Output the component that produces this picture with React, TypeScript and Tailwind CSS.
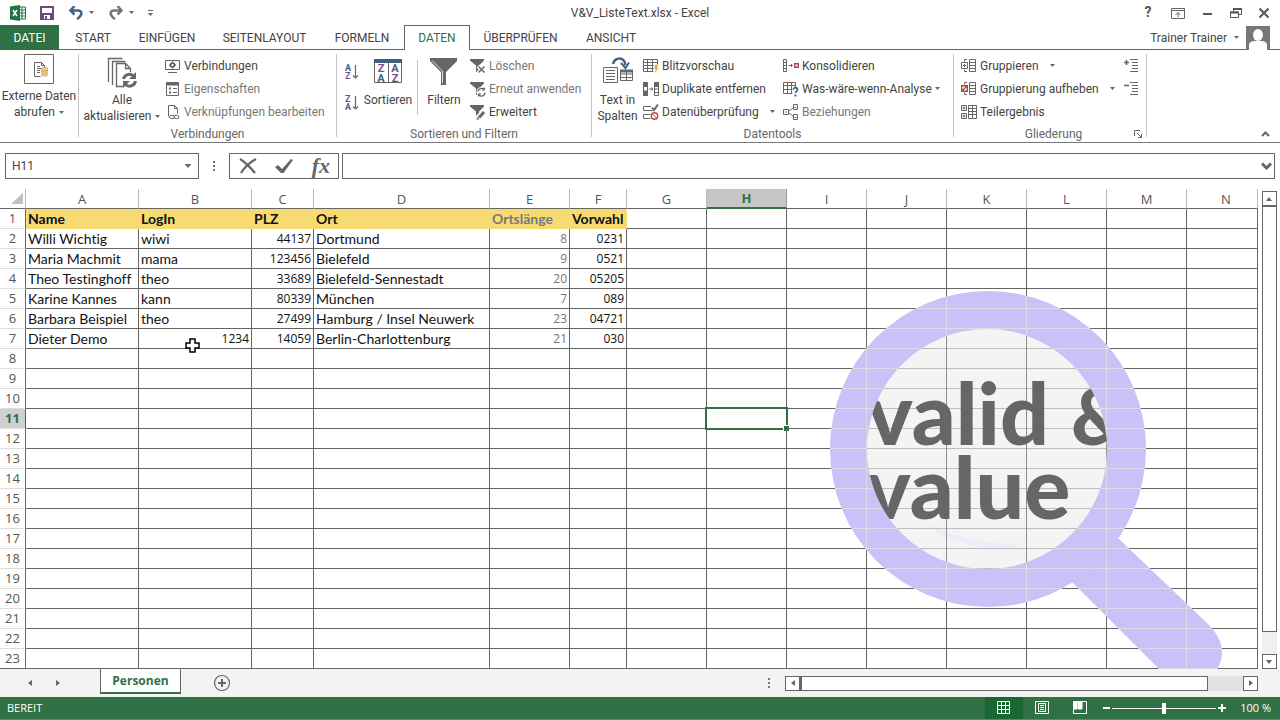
import { useState } from 'react';
import type { ReactNode } from 'react';
import { clsx } from 'clsx';

const Caret = ({ className }: { className?: string }) => (
  <svg viewBox="0 0 5 3" className={clsx('h-[3px] w-[5px] shrink-0 fill-[#666]', className)}>
    <path d="M0 0h5L2.5 3z" />
  </svg>
);

const Icon = ({ children, className = 'size-4' }: { children: ReactNode; className?: string }) => {
  const [w, h] = className === 'size-4' ? [16, 16] : [30, 30];
  return (
    <svg viewBox={`0 0 ${w} ${h}`} fill="none" stroke="#666" className={clsx('shrink-0 overflow-visible', className)}>
      {children}
    </svg>
  );
};

/* ---------- small ribbon icons ---------- */

const ConnectionsIcon = () => (
  <Icon>
    <path d="M.5 2.5h14v9H.5zM3 14.5h9" />
    <circle cx="7.5" cy="7" r="2" stroke="#555" strokeWidth="1.6" />
    <path d="M7.5 3.5v1.5M7.5 9v1.500M4 7h1.500M9.500 7H11" stroke="#555" />
  </Icon>
);

const PropertiesIcon = () => (
  <Icon>
    <path d="M1.500 1.500h12v13h-12z" />
    <path d="M1 3h13" strokeWidth="3" />
    <path d="M4 7.500h2M4 11.500h2" strokeWidth="2" />
    <path d="M8 7.500h4M8 11.500h4" />
  </Icon>
);

const EditLinksIcon = () => (
  <Icon>
    <path d="M3.500 12.500v-11h6l3 3v5M9.500 1.500v3h3" />
    <ellipse cx="7" cy="13" rx="2.500" ry="1.700" />
    <ellipse cx="11.500" cy="13" rx="2.500" ry="1.700" />
  </Icon>
);

const Funnel = () => <path d="M0 1h14v1.500L9 7.500V14H6V7.500L0 2.500z" fill="#666" stroke="none" />;

const ClearIcon = () => (
  <Icon>
    <Funnel />
    <path d="M8 8l7 7M15 8l-7 7" stroke="#fff" strokeWidth="4" />
    <path d="M8.500 8.500l6 6M14.500 8.500l-6 6" strokeWidth="1.500" />
  </Icon>
);

const ReapplyIcon = () => (
  <Icon>
    <Funnel />
    <circle cx="11.500" cy="11" r="5" fill="#fff" stroke="none" />
    <path d="M8 10.500a3.500 3.500 0 0 1 6-2M15 11.500a3.500 3.500 0 0 1-6 2.500" strokeWidth="1.400" />
    <path d="M15 6v3.500h-3.500zM8 16v-3.500h3.500z" fill="#666" stroke="none" />
  </Icon>
);

const AdvancedIcon = () => (
  <Icon>
    <Funnel />
    <path d="M7.500 14.500l7-7" stroke="#fff" strokeWidth="6" />
    <path d="M9 13.500l5-5.500" strokeWidth="3" />
    <path d="M6.500 16l1-3 2 2z" fill="#666" stroke="none" />
  </Icon>
);

const FlashFillIcon = () => (
  <Icon>
    <path d="M.5 1.500h14v12H.5zM.5 4.500h14M.5 7.500h14M.5 10.500h14M4.500 1.500v12M9.500 1.500v12" />
    <path d="M11 6h5v10h-6z" fill="#fff" stroke="none" />
    <path d="M12.500 6.500h3l-1.500 3h2l-4.500 6 1.200-4.500H11z" fill="#e0b04c" stroke="none" />
  </Icon>
);

const DuplicatesIcon = () => (
  <Icon>
    <path d="M.5 1.500h4v13h-4zM11.500 1.500h4v13h-4z" />
    <path d="M.5 1.500h4v4h-4zM.5 10h4v4.500h-4zM11.500 1.500h4v4h-4z" fill="#666" />
    <path d="M11.500 8h4M11.500 11.500h4M6 8h4M8.500 6.500L10 8 8.500 9.500" />
  </Icon>
);

const ValidationIcon = () => (
  <Icon>
    <path d="M8 2.500H.5v4h9M7.500 10.500h-7v4h7" />
    <path d="M9 3.500l2 2.500 4-5.500" strokeWidth="2" />
    <circle cx="11.500" cy="12" r="3.200" stroke="#b9504c" strokeWidth="1.400" />
    <path d="M9.300 9.800l4.400 4.400" stroke="#b9504c" />
  </Icon>
);

const ConsolidateIcon = () => (
  <Icon>
    <path d="M.5 1.500h3v12h-3zM.5 4.500h3M.5 7.500h3M.5 10.500h3M5.500 7.500h4M8 6l1.500 1.500L8 9" />
    <path d="M11.700 5.700h3.600v3.600h-3.600z" stroke="#a8474f" strokeWidth="1.400" />
  </Icon>
);

const WhatIfIcon = () => (
  <Icon>
    <path d="M.5 1.500h12v11H.5zM.5 4.500h12M.5 8.500h12M4.500 1.500v11M8.500 1.500v11" stroke="#8a5a50" />
    <path d="M9.500 6h6.500v10H9.500z" fill="#fff" stroke="none" />
    <path d="M10.500 8.500a2 2 0 1 1 3 1.800c-.8.400-1 .7-1 1.700" stroke="#3f6389" strokeWidth="1.800" />
    <path d="M11.500 13.500h2v2h-2z" fill="#3f6389" stroke="none" />
  </Icon>
);

const RelationsIcon = () => (
  <Icon>
    <path d="M.5 5.500h5v5h-5zM10.500.5h4v5h-4zM10.500 10.500h4v5h-4zM6 7l4-3M6 9l4 3M2 8h2M11.500 3.500h2M11.500 13.500h2" />
  </Icon>
);

const outlineLines = 'M8.500 1.500h6v12h-6zM9 4.500h5M9 7.500h5M9 10.500h5';

const GroupIcon = () => (
  <Icon>
    <path d={`${outlineLines}M6 1.500H3.500v2M3.500 11.500v2H6`} />
    <path d="M.5 4.500h6v6h-6zM2 7.500h3M3.500 6v3" />
  </Icon>
);

const UngroupIcon = () => (
  <Icon>
    <path d={`${outlineLines}M6 1.500H3.500v2M3.500 11.500v2H6`} />
    <path d="M.7 4.700h5.600v5.600H.7zM1.500 9.500l4-4" stroke="#b0483c" strokeWidth="1.400" />
  </Icon>
);

const SubtotalIcon = () => (
  <Icon>
    <path d="M.5 1.500h5v5h-5zM.5 9.500h5v5h-5zM1.500 4h3M3 2.500v3M1.500 12h3M3 10.500v3M7.500 1.500h8v13h-8zM11.500 1.500v13M7.500 4.500h8M7.500 7.500h8M7.500 10.500h8" />
  </Icon>
);

const DetailIcon = ({ plus }: { plus?: boolean }) => (
  <Icon>
    <path d={plus ? 'M1 4.500h5M3.500 2v5' : 'M1 4.500h5'} strokeWidth="1.600" />
    <path d="M7 1.500h8M9 4.500h6M9 7.500h6M9 10.500h6M7 13.500h8" />
  </Icon>
);

const SortIcon = ({ first, second }: { first: string; second: string }) => (
  <Icon>
    <g fontSize="9" fontWeight="700" stroke="none">
      <text x="0" y="7" fill="#3f6389">{first}</text>
      <text x="0" y="15" fill="#7c4f8c">{second}</text>
    </g>
    <path d="M10.500 1v13M8 11.500l2.500 2.500 2.500-2.500" strokeWidth="1.200" />
  </Icon>
);

/* ---------- big ribbon icons ---------- */

const ExternalDataIcon = () => (
  <Icon className="size-[30px]">
    <path d="M.5.5h29v29H.5z" />
    <path d="M10.500 22.500v-14h7l3 3v3M17.500 8.500v3h3M10.500 22.500h6M13 12.500h3M13 14.500h5M13 16.500h3M13 18.500h3" />
    <path d="M17 15v6c0 1 1.500 1.500 3.500 1.500S24 22 24 21v-6z" fill="#e0c27a" stroke="none" />
    <ellipse cx="20.500" cy="15" rx="3.500" ry="1.500" fill="#efdca8" stroke="#c9a95e" />
  </Icon>
);

const RefreshAllIcon = () => (
  <Icon className="size-[30px]">
    <path d="M1.500 24V.5h14M5.500 27V3.500h13M16.500 28.500h-7v-23h9l5 5v4M18.500 5.500v5h5" strokeWidth="1.300" />
    <circle cx="22.500" cy="22" r="8" fill="#fff" stroke="none" />
    <path d="M16.500 21a6 6 0 0 1 10-3M28.500 23a6 6 0 0 1-10 3.500" strokeWidth="3" />
    <path d="M29 14v7h-7zM16 30v-7h7z" fill="#666" stroke="none" />
  </Icon>
);

const SortIconBig = () => (
  <Icon className="size-[30px]">
    <path d="M1.500 3.500h27v21h-27zM15.500 3.500v21" />
    <path d="M1 3h28" stroke="#3f5f80" strokeWidth="4" />
    <g fontSize="11" fontWeight="700" stroke="none" textAnchor="middle">
      <text x="8" y="14" fill="#7c4f8c">Z</text>
      <text x="8" y="24" fill="#3f6389">A</text>
      <text x="22" y="14" fill="#3f6389">A</text>
      <text x="22" y="24" fill="#7c4f8c">Z</text>
    </g>
  </Icon>
);

const FilterIconBig = () => (
  <Icon className="size-[30px]">
    <path d="M1 0h27v3L17 14v13h-5V14L1 3z" fill="#666" stroke="none" />
    <path d="M3 2.500L13.500 13v12" stroke="#ddd" />
  </Icon>
);

const TextColumnsIcon = () => (
  <Icon className="size-[30px]">
    <path d="M.5 9.500h14v15H.5zM3 12.500h9M3 15.500h9M3 18.500h9M3 21.500h9" />
    <path d="M17.500 12.500h12v10h-12zM17.500 16h12M17.500 19.500h12M23.500 14v8" />
    <path d="M17 13h13" strokeWidth="3" />
    <path d="M10 6c2-7 11-8 12.500 1" stroke="#3f6389" strokeWidth="2.500" />
    <path d="M18 5l4.500 5L26 4.500" stroke="#3f6389" strokeWidth="2" />
  </Icon>
);

/* ---------- ribbon building blocks ---------- */

const BigButton = ({ icon, lines, caret, className }: { icon: ReactNode; lines: string[]; caret?: boolean; className?: string }) => (
  <button className={clsx('flex shrink-0 flex-col items-center', className)}>
    {icon}
    {lines.map((line, i) => (
      <span key={line} className={clsx('flex items-center gap-1 whitespace-nowrap leading-4', i === 0 && 'mt-1')}>
        {line}
        {caret && i === lines.length - 1 && <Caret />}
      </span>
    ))}
  </button>
);

type SmallItem = { icon: ReactNode; label: string; muted?: boolean; caret?: string };

const SmallButtons = ({ items, className }: { items: SmallItem[]; className?: string }) => (
  <div className={clsx('flex flex-col items-start', className)}>
    {items.map(({ icon, label, muted, caret }) => (
      <button key={label} className={clsx('flex h-[23px] items-center gap-[3px] whitespace-nowrap', muted && 'text-[#777]')}>
        {icon}
        {label}
        {caret && <Caret className={caret} />}
      </button>
    ))}
  </div>
);

const RibbonGroup = ({ title, className, launcher, children }: { title?: string; className: string; launcher?: boolean; children: ReactNode }) => (
  <>
    <section className={clsx('relative flex shrink-0 flex-col', className)}>
      <div className="flex h-[72px] items-start">{children}</div>
      <div className="h-4 text-center leading-4 text-[#666]">{title}</div>
      {launcher && (
        <button aria-label="Dialogfeld öffnen" className="absolute right-1 bottom-1">
          <svg viewBox="0 0 8 8" fill="none" stroke="#666" className="size-2">
            <path d="M.5 6V.5H6M3 3l4 4M7.500 4v3.500H4" />
          </svg>
        </button>
      )}
    </section>
    <div className="h-[83px] w-px shrink-0 bg-[#c6c6c6]" />
  </>
);

const TitleBar = () => (
  <header className="grid h-[25px] grid-cols-[1fr_auto_1fr] items-center">
    <div className="flex items-center pl-[10px]">
      <svg viewBox="0 0 16 16" className="size-4">
        <path d="M8 2h7.500v12H8z" fill="#fff" stroke="#217346" />
        <path d="M9 5h6M9 8h6M9 11h6M12 2v12" stroke="#217346" />
        <path d="M0 1.500L10 0v16L0 14.500z" fill="#217346" />
        <path d="M3 5l4 6M7 5l-4 6" stroke="#fff" strokeWidth="1.500" />
      </svg>
      <button aria-label="Speichern" className="ml-[14px]">
        <svg viewBox="0 0 14 14" className="size-[14px]">
          <path d="M1 1h12v12H1z" fill="#fff" stroke="#6b4a80" strokeWidth="2" />
          <path d="M1 7h12v6H1z" fill="#6b4a80" />
          <path d="M4 9h6v4H4z" fill="#fff" />
          <path d="M5 10h2v3H5z" fill="#6b4a80" />
        </svg>
      </button>
      <button aria-label="Rückgängig" className="ml-[15px] flex items-center gap-[6px]">
        <svg viewBox="0 0 14 14" fill="none" stroke="#3f6389" strokeWidth="2.500" className="size-[14px]">
          <path d="M5.500 0L1.500 4.500l4 4M2 4.500h6.500c5.500 0 5 5-.5 8.500" />
        </svg>
        <Caret />
      </button>
      <button aria-label="Wiederholen" className="ml-[15px] flex items-center gap-[6px]">
        <svg viewBox="0 0 14 14" fill="none" stroke="#777" strokeWidth="2.500" className="size-[14px]">
          <path d="M8.500 0l4 4.500-4 4M12 4.500H5.500c-5.500 0-5 5 .5 8.500" />
        </svg>
        <Caret />
      </button>
      <button aria-label="Symbolleiste anpassen" className="ml-[14px]">
        <svg viewBox="0 0 5 6" className="h-[6px] w-[5px] fill-[#666]">
          <path d="M0 0h5v1H0zM0 3h5L2.500 6z" />
        </svg>
      </button>
    </div>
    <h1>V&amp;V_ListeText.xlsx - Excel</h1>
    <div className="flex items-center justify-end gap-4 pr-[10px] text-[#555]">
      <button aria-label="Hilfe" className="w-[14px] text-[14px] font-bold">?</button>
      <button aria-label="Menüband-Anzeigeoptionen">
        <svg viewBox="0 0 14 12" fill="none" stroke="#666" className="h-3 w-[14px]">
          <path d="M.5 1.500h13v10H.5zM.5 3.500h13M7 10V5.500M4.500 8L7 5.500 9.500 8" />
        </svg>
      </button>
      <button aria-label="Minimieren">
        <svg viewBox="0 0 13 12" className="h-3 w-[13px]"><path d="M2 6h9v2H2z" fill="#555" /></svg>
      </button>
      <button aria-label="Wiederherstellen">
        <svg viewBox="0 0 12 12" fill="none" stroke="#555" className="size-3">
          <path d="M3.500 4V1.500h8v6H9M.5 5h8v5.500h-8z" />
          <path d="M3 2h9M.5 5.500h8" strokeWidth="2" />
        </svg>
      </button>
      <button aria-label="Schließen">
        <svg viewBox="0 0 12 12" stroke="#555" strokeWidth="2" className="size-3"><path d="M1.500 1.500l9 9M10.500 1.500l-9 9" /></svg>
      </button>
    </div>
  </header>
);

const TABS = [
  { label: 'START', width: 'w-[64px]' },
  { label: 'EINFÜGEN', width: 'w-[84px]' },
  { label: 'SEITENLAYOUT', width: 'w-[111px]' },
  { label: 'FORMELN', width: 'w-[84px]' },
  { label: 'DATEN', width: 'w-[66px]' },
  { label: 'ÜBERPRÜFEN', width: 'w-[101px]' },
  { label: 'ANSICHT', width: 'w-[80px]' },
];

const TabBar = () => {
  const [active, setActive] = useState('DATEN');
  return (
    <nav className="flex h-[25px] shadow-[inset_0_-1px_#666]">
      <button className="mr-[2px] w-[59px] bg-[#2f7145] text-white">DATEI</button>
      {TABS.map(({ label, width }) => (
        <button
          key={label}
          onClick={() => setActive(label)}
          className={clsx('shrink-0', width, active === label && 'border border-b-0 border-[#666] bg-white text-[#2f7145]')}
        >
          {label}
        </button>
      ))}
      <button className="ml-auto flex items-center gap-[7px] pr-[10px]">
        Trainer Trainer
        <Caret />
        <svg viewBox="0 0 24 24" className="size-6">
          <path d="M0 0h24v24H0z" fill="#777" />
          <ellipse cx="12" cy="9" rx="5" ry="6" fill="#fff" />
          <path d="M3 24v-5c0-3 3-4 6-4h6c3 0 6 1 6 4v5z" fill="#fff" />
        </svg>
      </button>
    </nav>
  );
};

const Ribbon = () => (
  <div className="relative flex h-[93px] items-start overflow-hidden border-b border-[#777] pt-1">
    <RibbonGroup className="w-[78px]">
      <BigButton className="w-full" icon={<ExternalDataIcon />} lines={['Externe Daten', 'abrufen']} caret />
    </RibbonGroup>
    <RibbonGroup title="Verbindungen" className="w-[257px]">
      <BigButton className="w-[86px] pt-1" icon={<RefreshAllIcon />} lines={['Alle', 'aktualisieren']} caret />
      <SmallButtons
        items={[
          { icon: <ConnectionsIcon />, label: 'Verbindungen' },
          { icon: <PropertiesIcon />, label: 'Eigenschaften', muted: true },
          { icon: <EditLinksIcon />, label: 'Verknüpfungen bearbeiten', muted: true },
        ]}
      />
    </RibbonGroup>
    <RibbonGroup title="Sortieren und Filtern" className="w-[254px]">
      <div className="flex w-[24px] flex-col items-end gap-[15px] pt-[10px]">
        <button aria-label="Von A bis Z sortieren"><SortIcon first="A" second="Z" /></button>
        <button aria-label="Von Z bis A sortieren"><SortIcon first="Z" second="A" /></button>
      </div>
      <BigButton className="w-[54px] pt-1" icon={<SortIconBig />} lines={['Sortieren']} />
      <div className="mx-[2px] mt-[6px] h-[55px] w-px bg-[#c6c6c6]" />
      <BigButton className="w-[48px] pt-1" icon={<FilterIconBig />} lines={['Filtern']} />
      <SmallButtons
        className="ml-[2px]"
        items={[
          { icon: <ClearIcon />, label: 'Löschen', muted: true },
          { icon: <ReapplyIcon />, label: 'Erneut anwenden', muted: true },
          { icon: <AdvancedIcon />, label: 'Erweitert' },
        ]}
      />
    </RibbonGroup>
    <RibbonGroup title="Datentools" className="w-[361px]">
      <BigButton className="w-[51px] pt-1" icon={<TextColumnsIcon />} lines={['Text in', 'Spalten']} />
      <SmallButtons
        className="w-[140px]"
        items={[
          { icon: <FlashFillIcon />, label: 'Blitzvorschau' },
          { icon: <DuplicatesIcon />, label: 'Duplikate entfernen' },
          { icon: <ValidationIcon />, label: 'Datenüberprüfung', caret: 'ml-2' },
        ]}
      />
      <SmallButtons
        items={[
          { icon: <ConsolidateIcon />, label: 'Konsolidieren' },
          { icon: <WhatIfIcon />, label: 'Was-wäre-wenn-Analyse', caret: 'ml-0' },
          { icon: <RelationsIcon />, label: 'Beziehungen', muted: true },
        ]}
      />
    </RibbonGroup>
    <RibbonGroup title="Gliederung" className="w-[192px] pl-[7px]" launcher>
      <SmallButtons
        className="w-[162px]"
        items={[
          { icon: <GroupIcon />, label: 'Gruppieren', caret: 'ml-2' },
          { icon: <UngroupIcon />, label: 'Gruppierung aufheben', caret: 'ml-2' },
          { icon: <SubtotalIcon />, label: 'Teilergebnis' },
        ]}
      />
      <div className="flex flex-col">
        <button aria-label="Detail anzeigen" className="flex h-[23px] items-center"><DetailIcon plus /></button>
        <button aria-label="Detail ausblenden" className="flex h-[23px] items-center"><DetailIcon /></button>
      </div>
    </RibbonGroup>
    <button aria-label="Menüband reduzieren" className="absolute right-[10px] bottom-[5px]">
      <svg viewBox="0 0 9 6" fill="none" stroke="#666" strokeWidth="2" className="h-[6px] w-[9px]"><path d="M1 5l3.500-3.500L8 5" /></svg>
    </button>
  </div>
);

const Dots = () => (
  <svg viewBox="0 0 2 10" className="h-[10px] w-[2px] fill-[#777]">
    <path d="M0 0h2v2H0zM0 4h2v2H0zM0 8h2v2H0z" />
  </svg>
);

const FormulaBar = () => (
  <div className="flex h-[46px] items-start pt-[10px] pr-[5px] pl-[5px]">
    <div className="flex h-[26px] w-[194px] items-center border border-[#666] pr-1.5 pl-1.5">
      <input aria-label="Namenfeld" defaultValue="H11" className="min-w-0 flex-1 outline-none" />
      <button aria-label="Namenfeld öffnen"><Caret className="h-[4px] w-[8px]" /></button>
    </div>
    <div className="flex h-[26px] w-[30px] items-center justify-center"><Dots /></div>
    <div className="mr-[3px] flex h-[26px] w-[110px] items-center justify-between border border-[#666] pr-2 pl-[9px]">
      <button aria-label="Abbrechen">
        <svg viewBox="0 0 18 16" fill="none" stroke="#666" strokeWidth="2.200" className="h-4 w-[18px]"><path d="M1 1c5 3 10 8 15 14M17 1C10 5 5 10 2 15" /></svg>
      </button>
      <button aria-label="Eingeben">
        <svg viewBox="0 0 18 16" fill="#666" className="h-4 w-[18px]"><path d="M0 9l3-2 4 4L16 1l2 1-9.500 13H6z" /></svg>
      </button>
      <button aria-label="Funktion einfügen" className="font-['Liberation_Serif',serif] text-[22px] leading-5 font-bold text-[#666] italic">fx</button>
    </div>
    <div className="flex h-[26px] flex-1 items-center border border-[#666] pr-[2px]">
      <input aria-label="Bearbeitungsleiste" className="min-w-0 flex-1 px-2 outline-none" />
      <button aria-label="Bearbeitungsleiste erweitern">
        <svg viewBox="0 0 11 8" fill="none" stroke="#666" strokeWidth="3" className="h-2 w-[11px]"><path d="M1 1.500l4.500 4.500L10 1.500" /></svg>
      </button>
    </div>
  </div>
);

const COLUMNS = [
  { name: 'A', width: 'w-[113px]' },
  { name: 'B', width: 'w-[113px]' },
  { name: 'C', width: 'w-[62px]' },
  { name: 'D', width: 'w-[176px]' },
  { name: 'E', width: 'w-[80px]' },
  { name: 'F', width: 'w-[57px]' },
  { name: 'G', width: 'w-[80px]' },
  { name: 'H', width: 'w-[80px]' },
  { name: 'I', width: 'w-[80px]' },
  { name: 'J', width: 'w-[80px]' },
  { name: 'K', width: 'w-[80px]' },
  { name: 'L', width: 'w-[80px]' },
  { name: 'M', width: 'w-[80px]' },
  { name: 'N', width: '' },
];

const ROWS: (string | number)[][] = [
  ['Name', 'LogIn', 'PLZ', 'Ort', 'Ortslänge', 'Vorwahl'],
  ['Willi Wichtig', 'wiwi', 44137, 'Dortmund', 8, '0231'],
  ['Maria Machmit', 'mama', 123456, 'Bielefeld', 9, '0521'],
  ['Theo Testinghoff', 'theo', 33689, 'Bielefeld-Sennestadt', 20, '05205'],
  ['Karine Kannes', 'kann', 80339, 'München', 7, '089'],
  ['Barbara Beispiel', 'theo', 27499, 'Hamburg / Insel Neuwerk', 23, '04721'],
  ['Dieter Demo', 1234, 14059, 'Berlin-Charlottenburg', 21, '030'],
];

const ROW_COUNT = 23;
const SELECTED = { col: 7, row: 11 };

// Logo picture floating over the cells, grid lines shine through it
const Magnifier = () => (
  <svg viewBox="829 290 395 380" className="pointer-events-none absolute top-[101px] left-[829px] h-[380px] w-[395px]">
    <defs>
      <pattern id="ringGrid" x="786" y="288" width="80" height="20" patternUnits="userSpaceOnUse">
        <path d="M0 .5h80M.5 0v20" stroke="#dedce4" />
      </pattern>
      <pattern id="lensGrid" x="786" y="288" width="80" height="20" patternUnits="userSpaceOnUse">
        <path d="M0 .5h80" stroke="#bcbcbc" />
        <path d="M.5 0v20" stroke="#8c8c8c" />
      </pattern>
      <clipPath id="lens"><circle cx="987" cy="449" r="120" /></clipPath>
      <g id="glass">
        <circle cx="988" cy="449" r="158" />
        <path d="M1070 580L1160 670h57c4-8 5-12 5-18 0-10-6-20-14-28l-89-85-20-10z" />
      </g>
    </defs>
    <use href="#glass" fill="#c9c2f9" />
    <circle cx="988" cy="449" r="158" fill="url(#ringGrid)" />
    <path d="M1073 583L1160 670h57c4-8 5-12 5-18 0-10-6-20-14-28l-89-85a158 158 0 0 1-46 44z" fill="url(#ringGrid)" />
    <circle cx="987" cy="449" r="120" fill="#f4f4f4" />
    <path d="M925 522q40 22 95 22l-10 6q-60-2-85-28z" fill="#eeecfa" />
    <circle cx="987" cy="449" r="120" fill="url(#lensGrid)" />
    <g clipPath="url(#lens)" fill="#666" fontSize="86" fontWeight="900" className="font-[Lato,sans-serif]">
      <text x="867" y="445">valid</text>
      <text x="1071" y="445" fontSize="78">&amp;</text>
      <text x="865" y="519">value</text>
    </g>
  </svg>
);

const CellCursor = () => (
  <svg viewBox="0 0 15 15" className="pointer-events-none absolute top-[149px] left-[185px] size-[15px]">
    <path d="M5 1h5v4h4v5h-4v4H5v-4H1V5h4z" fill="#fff" stroke="#000" strokeWidth="1.500" />
  </svg>
);

const Sheet = () => (
  <div className="relative min-w-0 flex-1 overflow-hidden">
    <table className="w-full table-fixed border-separate border-spacing-0 font-[Lato,sans-serif] text-[14px] leading-[19px] whitespace-nowrap text-[#111] [font-variant-ligatures:none]">
      <thead>
        <tr className="font-['Open_Sans',sans-serif] text-[13px] leading-[18px]">
          <th className="h-5 w-[26px] border-r border-b border-r-[#bbb] border-b-[#666] p-0">
            <svg viewBox="0 0 12 11" className="ml-auto h-[11px] w-[14px] pr-[2px] fill-[#c0c0c0]"><path d="M12 0v11H0z" /></svg>
          </th>
          {COLUMNS.map(({ name, width }, i) => (
            <th
              key={name}
              className={clsx(
                'h-5 border-r p-0',
                width,
                name === 'N' && 'pl-2',
                i === SELECTED.col
                  ? 'border-b-2 border-r-[#999] border-b-[#2f7145] bg-[#c6c6c6] font-bold text-[#2f7145]'
                  : 'border-b border-r-[#bbb] border-b-[#666] font-normal text-[#555]'
              )}
            >
              {name}
            </th>
          ))}
        </tr>
      </thead>
      <tbody>
        {Array.from({ length: ROW_COUNT }, (_, r) => (
          <tr key={r}>
            <th
              className={clsx(
                "h-5 border-r border-b p-0 font-['Open_Sans',sans-serif] text-[13px]",
                r + 1 === SELECTED.row
                  ? 'border-r-[#2f7145] bg-[#d0d0d0] font-bold text-[#2f7145]'
                  : 'border-r-[#666] font-normal text-[#555]',
                r + 1 === ROW_COUNT ? 'border-b-[#666]' : 'border-b-[#ddd]'
              )}
            >
              {r + 1}
            </th>
            {COLUMNS.map(({ name }, c) => {
              const value = ROWS[r]?.[c];
              const head = r === 0 && c < 6;
              const numeric = !head && (typeof value === 'number' || c === 5);
              return (
                <td
                  key={name}
                  className={clsx(
                    'relative h-5 border-r border-b px-[2px] py-0',
                    head ? 'border-[#f8da72] bg-[#f8da72] font-bold' : 'border-[#666]',
                    numeric && "text-right font-['Open_Sans',sans-serif] text-[12px]",
                    c === 4 && 'text-[#777]'
                  )}
                >
                  {value}
                  {c === SELECTED.col && r + 1 === SELECTED.row && (
                    <div className="absolute -inset-[2px] border-2 border-[#2f7145]">
                      <div className="absolute -right-[3px] -bottom-[3px] size-[6px] border-t border-l border-white bg-[#2f7145]" />
                    </div>
                  )}
                </td>
              );
            })}
          </tr>
        ))}
      </tbody>
    </table>
    <Magnifier />
    <CellCursor />
  </div>
);

const arrows = {
  up: 'M4 2l3 4H1z',
  down: 'M4 6l3-4H1z',
  left: 'M2 4l4-3v6z',
  right: 'M6 4L2 1v6z',
};

const ArrowButton = ({ dir, label, bare }: { dir: keyof typeof arrows; label: string; bare?: boolean }) => (
  <button
    aria-label={label}
    className={clsx('flex size-[15px] shrink-0 items-center justify-center', !bare && 'border border-[#666] bg-white')}
  >
    <svg viewBox="0 0 8 8" className="size-2 fill-[#666]"><path d={arrows[dir]} /></svg>
  </button>
);

const VerticalScroll = () => (
  <div className="flex w-[22px] shrink-0 flex-col items-center pt-[2px]">
    <ArrowButton dir="up" label="Nach oben" />
    <div className="flex w-[15px] flex-1 flex-col bg-[#f0f0f0]">
      <div className="h-[95%] border border-[#666] bg-white" />
    </div>
    <ArrowButton dir="down" label="Nach unten" />
  </div>
);

const SheetBar = () => (
  <div className="flex h-7 items-start bg-[#f3f3f3]">
    <div className="flex h-full w-[100px] items-center gap-[13px] pl-[22px]">
      <ArrowButton dir="left" label="Vorheriges Blatt" bare />
      <ArrowButton dir="right" label="Nächstes Blatt" bare />
    </div>
    <button className="h-[25px] w-[81px] border-x border-b-2 border-x-[#666] border-b-[#2f7145] bg-white font-['Open_Sans',sans-serif] text-[12px] font-bold text-[#2f7145]">Personen</button>
    <button aria-label="Neues Blatt" className="mt-[5px] ml-8">
      <svg viewBox="0 0 18 18" fill="none" stroke="#666" className="size-[18px]">
        <circle cx="9" cy="9" r="7.500" strokeWidth="1.200" />
        <path d="M9 5v8M5 9h8" strokeWidth="2" />
      </svg>
    </button>
    <div className="ml-auto flex h-full w-[512px] items-center">
      <Dots />
      <div className="ml-[15px] flex flex-1 pr-[22px]">
        <ArrowButton dir="left" label="Nach links" />
        <div className="flex h-[15px] flex-1 bg-[#e2e2e2]">
          <div className="w-[92%] border border-l-2 border-[#666] bg-white" />
        </div>
        <ArrowButton dir="right" label="Nach rechts" />
      </div>
    </div>
  </div>
);

const StatusBar = () => (
  <footer className="flex h-[23px] items-center border-b border-[#777] bg-[#2f7145] pl-[7px] font-['Open_Sans',sans-serif] text-[11px] text-white">
    BEREIT
    <div className="ml-auto flex h-full items-center">
      <button aria-label="Normal" className="flex h-full w-[38px] items-center justify-center bg-[#1c6633]">
        <svg viewBox="0 0 14 14" fill="none" stroke="#fff" className="size-[14px]"><path d="M.5.5h12v12H.5zM4.500.5v12M8.500.5v12M.5 4.500h12M.5 8.500h12" /></svg>
      </button>
      <button aria-label="Seitenlayout" className="flex h-full w-[38px] items-center justify-center">
        <svg viewBox="0 0 14 14" fill="none" stroke="#fff" className="size-[14px]"><path d="M.5.5h13v12H.5zM3.500 2.500h7v8h-7zM5 4.500h4M5 6.500h4M5 8.500h4" /></svg>
      </button>
      <button aria-label="Umbruchvorschau" className="flex h-full w-[38px] items-center justify-center">
        <svg viewBox="0 0 14 14" fill="none" stroke="#fff" className="size-[14px]"><path d="M.5.5h13v12H.5z" /><path d="M1 1h3v7H1zM5 1h4v7H5z" fill="#fff" /></svg>
      </button>
      <button aria-label="Verkleinern" className="ml-1 h-[2px] w-[7px] bg-white" />
      <input
        type="range"
        aria-label="Zoom"
        defaultValue={50}
        className="mx-[2px] h-3 w-[104px] appearance-none bg-[linear-gradient(#fff,#fff)] bg-[length:100%_1px] bg-center bg-no-repeat [&::-webkit-slider-thumb]:h-[11px] [&::-webkit-slider-thumb]:w-1 [&::-webkit-slider-thumb]:appearance-none [&::-webkit-slider-thumb]:bg-white"
      />
      <button aria-label="Vergrößern">
        <svg viewBox="0 0 8 8" className="size-2 fill-white"><path d="M3 0h2v3h3v2H5v3H3V5H0V3h3z" /></svg>
      </button>
      <button className="w-[54px] pr-[9px] text-right">100 %</button>
    </div>
  </footer>
);

export default function App() {
  return (
    <div className="min-h-screen overflow-hidden bg-white font-[Roboto,sans-serif] text-[12px] text-[#444]">
      <TitleBar />
      <TabBar />
      <Ribbon />
      <FormulaBar />
      <div className="flex">
        <Sheet />
        <VerticalScroll />
      </div>
      <SheetBar />
      <StatusBar />
    </div>
  );
}
